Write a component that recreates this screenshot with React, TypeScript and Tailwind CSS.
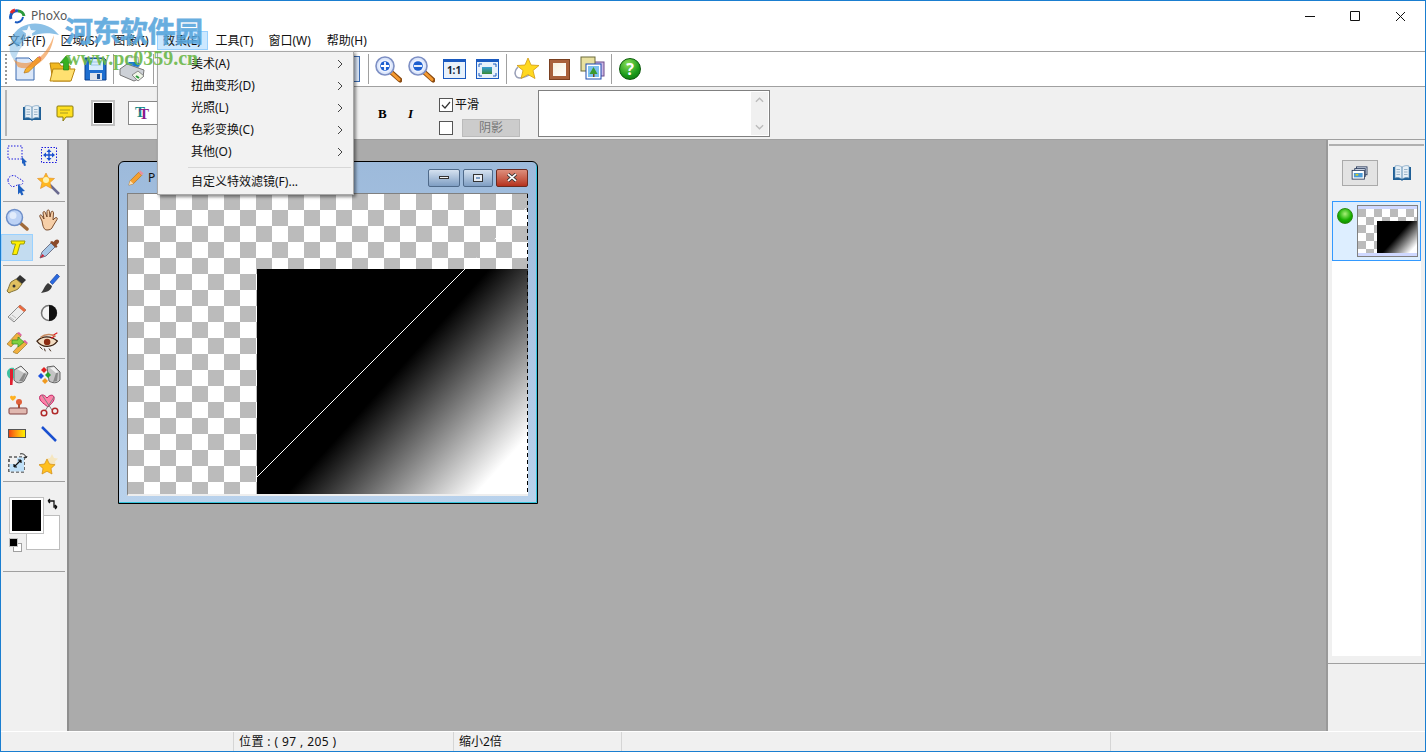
import React from 'react';

const Sep = () => <div className="w-px h-[30px] bg-[#a0a0a0] shrink-0" />;
const HLine = () => <div className="h-px mx-[2px] bg-[#a0a0a0]" />;

const glass = (sign: string) => (
  <svg viewBox="0 0 28 28" className="w-[28px] h-[28px] shrink-0">
    <path d="M17 17l9 8" stroke="#8a4a10" strokeWidth="5" strokeLinecap="round" />
    <path d="M18 18l7 6.5" stroke="#f59a30" strokeWidth="3" strokeLinecap="round" />
    <circle cx="11" cy="11" r="9" fill="#dbe6fb" stroke="#7d8fc4" strokeWidth="1.6" />
    <circle cx="11" cy="11" r="6.5" fill="#eef3ff" />
    <circle cx="11" cy="11" r="4.8" fill="#1c5fd0" />
    <path d={sign} stroke="#fff" strokeWidth="1.8" />
  </svg>
);

const Book = () => (
  <svg viewBox="0 0 24 24" className="w-[24px] h-[24px]">
    <path d="M3 6h18v13H13l-1 1-1-1H3z" fill="#1f5f96" />
    <path d="M5 5c3-1 5 0 7 1v12c-2-1-4-2-7-1zM19 5c-3-1-5 0-7 1v12c2-1 4-2 7-1z" fill="#e6eff6" stroke="#5f8fb5" strokeWidth=".6" />
    <path d="M6.5 8.5h3.5M6.500 11h3.500M6.500 13.500h3.500M14 8.500h3.500M14 11h3.500M14 13.500h3.500" stroke="#9bb4c8" />
  </svg>
);

const Menu = () => (
  <div className="absolute left-[156px] top-[50px] w-[197px] h-[144px] z-20 bg-[#f2f2f2] border border-[#a8a8a8] shadow-[2px_2px_3px_rgba(0,0,0,0.45)] pt-px text-[12px] text-[#111]">
    {['美术(A)', '扭曲变形(D)', '光照(L)', '色彩变换(C)', '其他(O)'].map((t) => (
      <div key={t} className="h-[22px] pl-[33px] pr-[10px] flex items-center justify-between">
        <span>{t}</span>
        <svg viewBox="0 0 6 10" className="w-[6px] h-[10px]">
          <path d="M1 1l4 4-4 4" fill="none" stroke="#444" strokeWidth="1" />
        </svg>
      </div>
    ))}
    <div className="h-px bg-[#d7d7d7] mt-[4px] ml-[30px] mr-[2px]" />
    <div className="h-[22px] mt-[3px] pl-[33px] flex items-center">自定义特效滤镜(F)...</div>
  </div>
);

const Watermark = () => (
  <div className="absolute left-0 top-0 w-[210px] h-[80px] z-30 pointer-events-none">
    <svg viewBox="0 0 60 80" className="absolute left-[4px] top-[4px] w-[60px] h-[80px]">
      <path d="M6 34C14 14 42 14 54 30 40 26 24 28 12 42z" fill="#5aa5dc" opacity=".7" />
      <path d="M8 54c10 8 30 6 41-24-2 22-20 38-36 32z" fill="#f08a30" opacity=".6" />
      <path d="M6 36c-3 8-1 14 4 20 2-8 6-14 10-18z" fill="#5aa5dc" opacity=".4" />
      <path d="M24 20l2 5 5 .5-4 3 1 5-4-3-4 3 1-5-4-3 5-.5z" fill="#fff" opacity=".9" />
    </svg>
    <div className="absolute left-[64px] top-[12px] text-[28px] leading-[36px] tracking-[-0.5px] font-bold text-[#58a6dc] opacity-90 whitespace-nowrap [-webkit-text-stroke:0.6px_#58a6dc]">河东软件园</div>
    <div className="absolute left-[65px] top-[47px] text-[20px] leading-[20px] font-bold text-[#6cb84a] opacity-90 whitespace-nowrap [font-family:'Liberation_Serif',serif]">www.pc0359.cn</div>
  </div>
);

const tools: React.ReactNode[][] = [
  [
    <svg key="a" viewBox="0 0 24 24" className="w-[24px] h-[24px]">
      <rect x="3" y="3" width="14" height="13" fill="none" stroke="#1a1ae0" strokeDasharray="1.500 1.500" />
      <path d="M17 14l5 5-2 .5 1 3-2 .5-1-3-1 1z" fill="#1d5fc0" />
    </svg>,
    <svg key="b" viewBox="0 0 24 24" className="w-[24px] h-[24px]">
      <rect x="4.500" y="4.500" width="15" height="15" fill="none" stroke="#1a1ae0" strokeDasharray="1.500 1.500" />
      <path d="M12 6l2.500 3h-5zM12 18l2.500-3h-5zM6 12l3-2.500v5zM18 12l-3-2.500v5z" fill="#1a50d0" />
      <path d="M11.300 9h1.400v6h-1.400zM9 11.300h6v1.400H9z" fill="#1a50d0" />
    </svg>,
  ],
  [
    <svg key="a" viewBox="0 0 24 24" className="w-[24px] h-[24px]">
      <path d="M3 8c0-4 6-6 9-3s6 2 6 5-3 3-5 3-5 3-7 1-3-3-3-6z" fill="none" stroke="#1a1ae0" strokeDasharray="1.500 1.500" />
      <path d="M13 12l7 7-3 .5 1.500 3-2 1-1.500-3-2 2z" fill="#1d5fc0" />
    </svg>,
    <svg key="b" viewBox="0 0 24 24" className="w-[24px] h-[24px]">
      <path d="M13 13l9 9" stroke="#6a6a90" strokeWidth="2.500" />
      <path d="M9 1l2.500 5 6 .5-4.500 4 1.500 6L9 13.500 3.500 16.500 5 10.500 .5 6.500l6-.5z" fill="#ffb820" stroke="#e08a20" strokeWidth=".6" />
      <circle cx="9" cy="8" r="3" fill="#fff3b0" />
    </svg>,
  ],
];
const tools2: React.ReactNode[][] = [
  [
    <svg key="a" viewBox="0 0 24 24" className="w-[24px] h-[24px]">
      <path d="M14 14l8 7" stroke="#a06a3a" strokeWidth="3.500" strokeLinecap="round" />
      <circle cx="9.500" cy="9.500" r="8" fill="#bcd2f5" stroke="#6d8ec8" strokeWidth="1.500" />
      <circle cx="8" cy="7.500" r="3.500" fill="#e2ecfb" />
    </svg>,
    <svg key="b" viewBox="0 0 24 24" className="w-[24px] h-[24px]">
      <path d="M5 13L3 9c-1-2 1-3 2-1l2 3-1-6c0-2 2-2 2.500 0L10 9V3.500c0-2 2.500-2 2.500 0L13 9l1-4.500c.5-2 2.500-1.500 2.500.5L16 12l2-2c1.500-1 3 0 2 1.500L16 18c-1 3-3 4-6 4s-4-3-5-9z" fill="#f6cfa8" stroke="#6a3a1a" strokeWidth=".9" />
    </svg>,
  ],
  [
    <svg key="a" viewBox="0 0 24 24" className="w-[24px] h-[24px]">
      <path d="M6 5h14l-1 3h-4l-3 10.500H7.500L10.500 8H7z" fill="#fff000" stroke="#9a9a10" strokeWidth="1" />
    </svg>,
    <svg key="b" viewBox="0 0 24 24" className="w-[24px] h-[24px]">
      <path d="M3 21l2-6 9-9 4 4-9 9z" fill="#a9c9e8" stroke="#5a5a70" strokeWidth=".8" />
      <path d="M3 21l2.500-4 2 2z" fill="#d02030" />
      <path d="M13 5l6 6 1.500-1.500-1-1.500c3-2 3-4 2-5s-3-1-5 2l-1.500-1z" fill="#8a4a2a" />
    </svg>,
  ],
];
const tools3: React.ReactNode[][] = [
  [
    <svg key="a" viewBox="0 0 24 24" className="w-[24px] h-[24px]">
      <path d="M15 3l6 5-4 4-6-5z" fill="#333" />
      <path d="M11 7l6 5-4 5c-3 2-6 2-9 4l-2-2c2-3 2-6 4-9z" fill="#e0c060" stroke="#6a5a20" strokeWidth=".8" />
      <circle cx="9" cy="14" r="1.500" fill="#333" />
    </svg>,
    <svg key="b" viewBox="0 0 24 24" className="w-[24px] h-[24px]">
      <path d="M13 10L20 2l2.500 2.500-7 8z" fill="#2a6ae0" stroke="#1a3a90" strokeWidth=".6" />
      <path d="M11 11l4 3c-1 4-4 6-11 7 3-3 3-7 7-10z" fill="#3a3a3a" />
    </svg>,
  ],
  [
    <svg key="a" viewBox="0 0 24 24" className="w-[24px] h-[24px]">
      <path d="M3 16L15 4l6 5L9 21z" fill="#ececec" stroke="#8a8a8a" />
      <path d="M13 6l2-2 6 5-2 2z" fill="#e86a40" />
      <path d="M5 16l4 3M7 14l4 3" stroke="#bbb" />
    </svg>,
    <svg key="b" viewBox="0 0 24 24" className="w-[24px] h-[24px]">
      <circle cx="12" cy="12" r="7.500" fill="#f5f5f5" stroke="#777" strokeWidth="1.500" />
      <path d="M12 4a8 8 0 010 16z" fill="#111" />
    </svg>,
  ],
  [
    <svg key="a" viewBox="0 0 24 24" className="w-[24px] h-[24px]">
      <path d="M2 14L12 3l4 3L6 17z" fill="#f0b040" stroke="#8a6a20" strokeWidth=".6" />
      <path d="M8 22L18 11l4 3-10 10z" fill="#f0b040" stroke="#8a6a20" strokeWidth=".6" />
      <path d="M7 10h6V7l6 5-6 5v-3H7z" fill="#7ed040" stroke="#3a8a20" strokeWidth=".7" />
      <path d="M12 3l2-1 3 3-1 1zM18 11l2-1 3 3-1 1z" fill="#e060a0" />
    </svg>,
    <svg key="b" viewBox="0 0 28 24" className="w-[26px] h-[24px]">
      <path d="M1 11c6-6 15-6 22 0-5 7-16 8-22 0z" fill="#f2dcc2" stroke="#3a2010" strokeWidth="1.300" />
      <circle cx="12" cy="12" r="3.500" fill="#8a2a10" />
      <path d="M16 8l4-2-2-1 5-3" stroke="#e01a20" fill="none" strokeWidth="1.200" />
      <path d="M5 7c5-4 12-4 16-1" stroke="#c88a60" fill="none" strokeWidth="1.500" />
      <path d="M4 17l3 3M9 19l1 3M14 19l2 3" stroke="#3a2010" />
    </svg>,
  ],
];
const tools4: React.ReactNode[][] = [
  [
    <svg key="a" viewBox="0 0 24 24" className="w-[24px] h-[24px]">
      <path d="M9 6l7-4 7 7-4 8c-4 3-8 2-10-1z" fill="#c4c4c4" stroke="#666" />
      <path d="M12 5l4-2 5 5-2 1z" fill="#f2f2f2" />
      <path d="M14 17l5-8 2 1-3 7z" fill="#888" />
      <path d="M2 9c0-4 4-6 7-5v10c-3 2-7 0-7-5z" fill="#40c0a0" />
      <path d="M5 5h3v9l-.500 7H5z" fill="#e02030" />
    </svg>,
    <svg key="b" viewBox="0 0 24 24" className="w-[24px] h-[24px]">
      <path d="M10 3l7-1 6 6v8c-3 4-8 3-11 1z" fill="#c4c4c4" stroke="#666" />
      <path d="M13 4l4-1 4 5-2 1z" fill="#f2f2f2" />
      <path d="M16 18l3-9 2 0-1 8z" fill="#888" />
      <path d="M7 3l3 3-3 3-3-3z" fill="#e02020" />
      <path d="M4 9l3 3-3 3-3-3z" fill="#1a50e0" />
      <path d="M11 8l3 3-3 3-3-3z" fill="#20a030" />
      <path d="M8 14l3 3-3 3-3-3z" fill="#f09a20" />
    </svg>,
  ],
  [
    <svg key="a" viewBox="0 0 24 24" className="w-[24px] h-[24px]">
      <circle cx="14" cy="9" r="3" fill="#e0603a" />
      <path d="M13 11h2v5h-2z" fill="#b05030" />
      <rect x="4" y="15" width="18" height="6" rx="1" fill="#e0b8b0" stroke="#804040" />
      <path d="M5 4c1-2 3-1 3 0 0-1 2-2 3 0 0 2-3 3-3 4-1-1-3-2-3-4z" fill="#ffb020" />
    </svg>,
    <svg key="b" viewBox="0 0 24 24" className="w-[24px] h-[24px]">
      <path d="M11 14C6 10 1 7 3 3c2-2 5-1 7 2 2-3 6-4 7-1 1 4-3 7-6 10z" fill="#ff80a8" stroke="#c02060" />
      <path d="M5 2l10 15M17 4L8 18" stroke="#808080" />
      <circle cx="7" cy="20" r="2.800" fill="none" stroke="#b02a2a" strokeWidth="1.500" />
      <circle cx="18" cy="18" r="2.800" fill="none" stroke="#b02a2a" strokeWidth="1.500" />
    </svg>,
  ],
  [
    <div key="a" className="w-[18px] h-[9px] border border-[#555] bg-gradient-to-r from-[#f04010] to-[#fff000]" />,
    <svg key="b" viewBox="0 0 24 24" className="w-[24px] h-[24px]">
      <path d="M5 5l14 14" stroke="#1a50d0" strokeWidth="2.500" />
    </svg>,
  ],
];

const ToolRow = ({ items, active }: { items: React.ReactNode[]; active?: boolean }) => (
  <div className="flex h-[29px]">
    <div className={active ? 'w-[32px] h-[27px] flex items-center justify-center bg-[#c3dcf0] border border-[#99d1ff]' : 'w-[32px] h-[29px] flex items-center justify-center'}>{items[0]}</div>
    <div className="w-[32px] h-[29px] flex items-center justify-center">{items[1]}</div>
  </div>
);

const LeftPane = () => (
  <div className="w-[68px] shrink-0 bg-[#f0f0f0] border-r-2 border-[#8f8f8f] flex flex-col">
    {tools.map((r, i) => <ToolRow key={i} items={r} />)}
    <div className="mt-[3px]"><HLine /></div>
    <div className="mt-[3px]">
      <ToolRow items={tools2[0]} />
      <ToolRow items={tools2[1]} active />
    </div>
    <div className="mt-[2px]"><HLine /></div>
    <div className="mt-[3px]">{tools3.map((r, i) => <ToolRow key={i} items={r} />)}</div>
    <div className="mt-[2px]"><HLine /></div>
    <div className="mt-[2px]">{tools4.map((r, i) => <ToolRow key={i} items={r} />)}</div>
    <div className="flex h-[30px]">
      <div className="w-[32px] flex items-center justify-center">
        <svg viewBox="0 0 24 24" className="w-[24px] h-[24px]">
          <rect x="4" y="6" width="15" height="15" fill="none" stroke="#111" strokeWidth="1.200" strokeDasharray="3 2" />
          <path d="M4.500 13h7.500V6.500H19V20.500H4.500z" fill="#bfe0f8" />
          <path d="M9 16l7-7M16 9h-3M16 9v3M9 16h3M9 16v-3" stroke="#111" strokeWidth="1.200" />
          <path d="M15 3c3-1 6 1 6 4M21 7l1-2M21 7l-2-1" stroke="#222" fill="none" />
        </svg>
      </div>
      <div className="w-[32px] flex items-center justify-center">
        <svg viewBox="0 0 24 24" className="w-[24px] h-[24px]">
          <path d="M15 3l2 4 4 .5-3 3 1 4-4-2-4 2 1-4-3-3 4-.5z" fill="#f5e6c0" />
          <path d="M10 8l2.500 5 5.500.7-4 3.800 1 5.500-5-2.700L5 23l1-5.500-4-3.800 5.500-.7z" fill="#ffc020" stroke="#d08a10" strokeWidth=".7" />
        </svg>
      </div>
    </div>
    <div className="mt-[3px]"><HLine /></div>
    <div className="relative h-[89px]">
      <div className="absolute left-[25px] top-[33px] w-[34px] h-[35px] bg-white border border-[#bdbdbd]" />
      <div className="absolute left-[9px] top-[16px] w-[33px] h-[35px] bg-black border-2 border-white outline outline-1 outline-[#c0c0c0]" />
      <svg viewBox="0 0 12 12" className="absolute left-[46px] top-[16px] w-[12px] h-[12px]">
        <path d="M1 3h6v6h3M1 3l2-2M1 3l2 2M10 9l-2-2M10 9l-2 2" fill="none" stroke="#111" strokeWidth="1.300" />
      </svg>
      <div className="absolute left-[12px] top-[61px] w-[9px] h-[9px] bg-white border border-[#a0a0a0]" />
      <div className="absolute left-[8px] top-[56px] w-[9px] h-[9px] bg-black border border-[#c0c0c0]" />
    </div>
    <HLine />
  </div>
);

const WinBtn = ({ w, cls, children }: { w: string; cls: string; children: React.ReactNode }) => (
  <div className={`${w} ${cls} h-[18px] rounded-[2px] border border-[#4f6a8a] flex items-center justify-center`}>{children}</div>
);

const Pencil = () => (
  <svg viewBox="0 0 18 18" className="w-[16px] h-[16px]">
    <path d="M1 17l1.500-5L12 2.500 15.500 6 6 15.500z" fill="#f5a030" stroke="#b06a10" strokeWidth=".7" />
    <path d="M12 2.500l2-2 3.500 3.500-2 2z" fill="#e890a0" />
    <path d="M1 17l1.500-5L6 15.500z" fill="#f6dfb8" />
  </svg>
);

const ChildWindow = () => (
  <div className="absolute left-[49px] top-[21px] w-[420px] h-[343px] border border-black rounded-t-[6px] bg-gradient-to-b from-[#9dbadb] to-[#b9d2ec] shadow-[inset_-1px_-1px_0_#35c4dc] flex flex-col">
    <div className="h-[31px] flex items-center shrink-0 pl-[9px] pr-[9px] text-[12px] text-[#111]">
      <Pencil />
      <span className="ml-[4px] flex-1">P</span>
      <div className="flex gap-[3px]">
        <WinBtn w="w-[32px]" cls="bg-gradient-to-b from-[#d5e2f0] to-[#7f9ec3]">
          <div className="w-[10px] h-[3px] bg-[#f0f0f0] border border-[#333]" />
        </WinBtn>
        <WinBtn w="w-[30px]" cls="bg-gradient-to-b from-[#d5e2f0] to-[#7f9ec3]">
          <div className="w-[10px] h-[8px] bg-[#e8eef5] border border-[#333] flex items-center justify-center"><div className="w-[4px] h-[2px] bg-[#7f9ec3]" /></div>
        </WinBtn>
        <WinBtn w="w-[32px]" cls="bg-gradient-to-b from-[#dd8e7c] to-[#b5301c] border-[#6a2a20]">
          <svg viewBox="0 0 10 8" className="w-[12px] h-[9px]">
            <path d="M1.500 1l7 6M8.500 1l-7 6" stroke="#333" strokeWidth="3" />
            <path d="M1.500 1l7 6M8.500 1l-7 6" stroke="#fff" strokeWidth="1.500" />
          </svg>
        </WinBtn>
      </div>
    </div>
    <div className="relative ml-[8px] w-[401px] h-[303px] shrink-0 border-l border-t border-[#808080] border-b-2 border-b-[#eee] bg-[conic-gradient(#fff_25%,#bbb_0_50%,#fff_0_75%,#bbb_0)] bg-[length:32px_32px]">
      <div className="absolute right-0 bottom-0 w-[271px] h-[225px] bg-[linear-gradient(132deg,#000_49%,#fff_89%)]" />
      <svg viewBox="0 0 400 300" className="absolute left-0 top-0 w-[400px] h-[300px]">
        <path d="M129 283L337 75" stroke="#fff" strokeWidth="1" />
        <path d="M337 75L400 12" stroke="#fff" strokeWidth="1" strokeDasharray="2 12" />
        <path d="M399.500 0V300" stroke="#000" strokeWidth="1" strokeDasharray="4 3" />
      </svg>
    </div>
  </div>
);

const RightPane = () => (
  <div className="w-[99px] shrink-0 bg-[#f0f0f0] border-l-2 border-[#999] flex flex-col">
    <div className="mt-[4px] mx-[1px] h-[2px] bg-[#b0b0b0]" />
    <div className="mt-[13px] h-[28px] flex items-center">
      <div className="ml-[14px] w-[36px] h-[26px] bg-[#e3e3e3] border border-[#aaa] flex items-center justify-center">
        <svg viewBox="0 0 20 16" className="w-[18px] h-[14px]">
          <rect x="6" y="1" width="12" height="9" fill="#dfe8f5" stroke="#2a3a5a" />
          <rect x="4" y="3" width="12" height="9" fill="#dfe8f5" stroke="#2a3a5a" />
          <rect x="1" y="5" width="14" height="10" fill="#fff" stroke="#2a3a5a" />
          <rect x="3" y="8" width="10" height="5" fill="#4a9ad8" />
          <path d="M5 9h3v2h-3z" fill="#d8d020" />
        </svg>
      </div>
      <div className="ml-[12px]"><Book /></div>
    </div>
    <div className="mt-[15px] mx-[4px] h-[454px] bg-white">
      <div className="h-[60px] -mt-px border border-[#3399ff] bg-[#ddeeff] flex">
        <div className="w-[24px] flex justify-center pt-[6px]">
          <div className="w-[16px] h-[16px] rounded-full bg-[radial-gradient(circle_at_50%_35%,#a8f078,#18b000_55%,#0a7a00)] border border-[#2a8a10]" />
        </div>
        <div className="mt-[3px] w-[61px] h-[52px] border border-[#808080] bg-[#cfd8ff] py-[3px]">
          <div className="relative h-[44px] bg-[conic-gradient(#fff_25%,#bbb_0_50%,#fff_0_75%,#bbb_0)] bg-[length:16px_16px]">
            <div className="absolute right-0 bottom-0 w-[40px] h-[32px] bg-[linear-gradient(132deg,#000_49%,#fff_89%)]" />
          </div>
        </div>
      </div>
    </div>
    <div className="mt-[7px] h-px bg-[#a0a0a0]" />
  </div>
);

export default function App() {
  return (
    <div className="relative w-[1426px] h-[752px] overflow-hidden flex flex-col border border-[#1a7ed0] bg-white text-[12px] leading-none text-[#111] [font-family:'Noto_Sans','Noto_Sans_CJK_SC',sans-serif]">
      <div className="h-[29px] shrink-0 flex items-center">
        <svg viewBox="0 0 18 18" className="ml-[7px] w-[18px] h-[18px]">
          <path d="M3 12a6 6 0 017-8" fill="none" stroke="#1a5ac0" strokeWidth="3" />
          <path d="M10 4a6 6 0 016 5" fill="none" stroke="#2a9a3a" strokeWidth="3" />
          <path d="M3 6a6 6 0 014-3" fill="none" stroke="#e02a2a" strokeWidth="3" />
          <path d="M15 10a6 6 0 01-8 5" fill="none" stroke="#1a5ac0" strokeWidth="2" />
        </svg>
        <span className="ml-[5px] text-[#555]">PhoXo</span>
        <div className="ml-auto flex items-center">
          <svg viewBox="0 0 130 12" className="w-[130px] h-[12px] mr-[15px]">
            <path d="M25 6.500h10M70.500 1.500h9v9h-9zM116 2l9 9M125 2l-9 9" fill="none" stroke="#111" strokeWidth="1" />
          </svg>
        </div>
      </div>
      <div className="h-[21px] shrink-0 flex items-center">
        <span className="ml-[7px]">文件(F)</span>
        <span className="ml-[15px]">区域(S)</span>
        <span className="ml-[15px]">图像(I)</span>
        <span className="ml-[8px] w-[51px] h-[19px] bg-[#cce8ff] border border-[#99d1ff] flex items-center justify-center">效果(E)</span>
        <span className="ml-[8px]">工具(T)</span>
        <span className="ml-[15px]">窗口(W)</span>
        <span className="ml-[16px]">帮助(H)</span>
      </div>
      <div className="h-[36px] shrink-0 border-y border-[#a0a0a0] flex items-center">
        <div className="ml-[4px] w-[2px] h-[30px] border-l-2 border-dotted border-[#999]" />
        <svg viewBox="0 0 28 28" className="ml-[7px] w-[28px] h-[28px]">
          <path d="M2 3h13l5 5v17H2z" fill="#dbe7f8" stroke="#3a6ab0" />
          <path d="M10 18l1.500-4L24 2l3 3-12.500 12z" fill="#f5b030" stroke="#a86a10" strokeWidth=".6" />
          <path d="M24 2l1.500-1 2 2-.5 2z" fill="#e86a70" />
        </svg>
        <svg viewBox="0 0 28 28" className="ml-[6px] w-[28px] h-[28px]">
          <path d="M2 8h9l2 3h9v15H5z" fill="#f2b820" stroke="#b88410" />
          <path d="M5 14h22l-4 12H2z" fill="#ffe070" stroke="#b88410" />
          <path d="M18 1l6 7h-3.500v7h-5V8H12z" fill="#38b020" stroke="#1a7a10" strokeWidth=".6" />
        </svg>
        <svg viewBox="0 0 28 28" className="ml-[5px] w-[28px] h-[28px]">
          <path d="M4 3h19l2 2v20H4z" fill="#1e6fd0" stroke="#0c3f8a" />
          <rect x="8" y="4" width="14" height="11" fill="#d8ecfc" />
          <path d="M10 7h10M10 10h10" stroke="#9cc4e6" />
          <rect x="9" y="18" width="12" height="7" fill="#dde3ea" />
          <rect x="16" y="19" width="3" height="5" fill="#1e4f90" />
        </svg>
        <div className="ml-[4px]"><Sep /></div>
        <svg viewBox="0 0 28 28" className="ml-[4px] w-[28px] h-[28px]">
          <path d="M9 2h11l1 10H8z" fill="#fafafa" stroke="#999" />
          <path d="M2 14l7-5 17 6-1 7-9 4L2 20z" fill="#cdd1d7" stroke="#777" />
          <path d="M8 9l12 3 3-3-5-2H11z" fill="#1a7ad0" />
          <path d="M14 20l6-4 6 5-6 5z" fill="#f0f6e8" stroke="#888" />
          <path d="M18 21l3 2" stroke="#2a9a3a" strokeWidth="2" />
        </svg>
        <div className="ml-[7px]"><Sep /></div>
        <div className="ml-[192px] w-[14px] h-[26px] bg-[#dbe7f8] border border-[#3a6ab0]" />
        <div className="ml-[8px]"><Sep /></div>
        <div className="ml-[5px]">{glass('M7 11h8M11 7v8')}</div>
        <div className="ml-[5px]">{glass('M7 11h8')}</div>
        <div className="ml-[5px] w-[28px] h-[28px] flex items-center justify-center">
          <div className="w-[23px] h-[20px] border border-[#1a5ac0] border-t-[3px] bg-[#e8f1fb] text-[10px] font-bold text-[#123] flex items-center justify-center">1:1</div>
        </div>
        <div className="ml-[5px] w-[28px] h-[28px] flex items-center justify-center">
          <div className="relative w-[23px] h-[20px] border border-[#1a5ac0] border-t-[3px] bg-[#e8f1fb] flex items-center justify-center">
            <svg viewBox="0 0 21 16" className="absolute inset-0 w-[21px] h-[16px]">
              <path d="M2 5V2h3M19 5V2h-3M2 11v3h3M19 11v3h-3" fill="none" stroke="#1a5ac0" />
            </svg>
            <div className="w-[10px] h-[7px] bg-gradient-to-b from-[#3a9ad8] to-[#3a8a30]" />
          </div>
        </div>
        <div className="ml-[5px]"><Sep /></div>
        <svg viewBox="0 0 28 28" className="ml-[5px] w-[28px] h-[28px]">
          <path d="M6 12c-5 5-3 11 2 11s8-2 12-5" fill="none" stroke="#9aa0b8" strokeWidth="1.500" />
          <path d="M16 3l3 7 8 .5-6 5 2 8-7-4-7 4 2-8-6-5 8-.5z" fill="#ffd820" stroke="#d09a10" strokeWidth=".8" />
        </svg>
        <div className="ml-[5px] w-[28px] h-[28px] flex items-center justify-center">
          <div className="w-[21px] h-[21px] border-[4px] border-[#a8603a] outline outline-1 outline-[#7a4020] -outline-offset-1 bg-gradient-to-br from-[#f6eeda] to-white" />
        </div>
        <svg viewBox="0 0 28 28" className="ml-[5px] w-[28px] h-[28px]">
          <rect x="16" y="7" width="10" height="14" fill="#cdb8e6" stroke="#6a4a8a" />
          <rect x="3" y="2" width="14" height="14" fill="#e8e0a0" stroke="#6a6a3a" />
          <rect x="8" y="9" width="15" height="15" fill="#fff" stroke="#1a4ab0" />
          <rect x="10" y="11" width="11" height="11" fill="#7ac0f0" />
          <path d="M15.500 12l4 7h-8z" fill="#3a9a30" />
          <rect x="15" y="19" width="1.500" height="3" fill="#7a4a1a" />
        </svg>
        <div className="ml-[5px]"><Sep /></div>
        <div className="ml-[7px] w-[22px] h-[22px] rounded-full border border-[#0a5a0a] bg-[radial-gradient(circle_at_40%_25%,#8fe05a,#1a9a1a_60%,#0a6a0a)] text-white text-[16px] font-bold flex items-center justify-center">?</div>
      </div>
      <div className="h-[53px] shrink-0 bg-[#f0f0f0] border-b border-[#a0a0a0] flex items-center">
        <div className="ml-[4px] w-[2px] h-[46px] bg-[#b5b5b5]" />
        <div className="ml-[13px]"><Book /></div>
        <svg viewBox="0 0 24 24" className="ml-[9px] w-[24px] h-[24px]">
          <path d="M5 5h14a1 1 0 011 1v9a1 1 0 01-1 1h-6l-3 4v-4H5a1 1 0 01-1-1V6a1 1 0 011-1z" fill="#ffe020" stroke="#8a7a10" />
          <path d="M7 9h10M7 12h8" stroke="#a89a20" />
        </svg>
        <div className="ml-[14px] w-[24px] h-[26px] bg-black border-[2px] border-[#c0c0c0] outline outline-1 -outline-offset-3 outline-white" />
        <div className="ml-[13px] w-[40px] h-[24px] bg-white border border-[#888] pl-[6px] flex items-center text-[15px] font-bold [font-family:'Liberation_Serif',serif]">
          <span className="-mt-[2px] text-[#1a8a8a]">T</span><span className="-ml-[6px] mt-[2px] text-[#8a1a8a]">T</span>
        </div>
        <div className="ml-[185px] w-px h-[20px] bg-[#777]" />
        <span className="ml-[24px] w-[10px] text-[13px] font-bold [font-family:'Liberation_Serif',serif] text-black">B</span>
        <span className="ml-[20px] w-[10px] text-[13px] font-bold italic [font-family:'Liberation_Serif',serif] text-black">I</span>
        <div className="ml-[21px] mt-[8px] flex flex-col gap-[7px]">
          <div className="flex items-center">
            <div className="w-[14px] h-[14px] bg-white border border-[#555] flex items-center justify-center">
              <svg viewBox="0 0 12 12" className="w-[12px] h-[12px]"><path d="M2 6l3 3 5-6" fill="none" stroke="#333" strokeWidth="1.200" /></svg>
            </div>
            <span className="ml-[2px]">平滑</span>
          </div>
          <div className="flex items-center">
            <div className="w-[14px] h-[14px] bg-white border border-[#555]" />
            <div className="ml-[9px] w-[58px] h-[18px] bg-[#ccc] border border-[#bbb] text-[#777] flex items-center justify-center">阴影</div>
          </div>
        </div>
        <div className="ml-[18px] w-[232px] h-[47px] bg-white border border-[#808080] flex justify-end">
          <div className="my-[1px] mr-px w-[17px] bg-[#f0f0f0] flex flex-col justify-between items-center py-[5px]">
            <svg viewBox="0 0 10 6" className="w-[9px] h-[6px]"><path d="M1 5l4-4 4 4" fill="none" stroke="#bbb" strokeWidth="1.500" /></svg>
            <svg viewBox="0 0 10 6" className="w-[9px] h-[6px]"><path d="M1 1l4 4 4-4" fill="none" stroke="#bbb" strokeWidth="1.500" /></svg>
          </div>
        </div>
      </div>
      <div className="flex flex-1 min-h-0">
        <LeftPane />
        <div className="relative flex-1 bg-[#ababab]">
          <ChildWindow />
        </div>
        <RightPane />
      </div>
      <div className="h-[20px] shrink-0 bg-[#f0f0f0] border-t border-white flex items-center">
        <div className="w-[233px] h-full border-r border-[#d5d5d5]" />
        <div className="w-[220px] h-full pl-[5px] pt-px border-r border-[#d5d5d5] flex items-center tracking-[0.4px]">位置 : ( 97 , 205 )</div>
        <div className="w-[168px] h-full pl-[5px] pt-px border-r border-[#d5d5d5] flex items-center">缩小2倍</div>
        <div className="w-[489px] h-full border-r border-[#d5d5d5]" />
      </div>
      <Menu />
      <Watermark />
    </div>
  );
}
